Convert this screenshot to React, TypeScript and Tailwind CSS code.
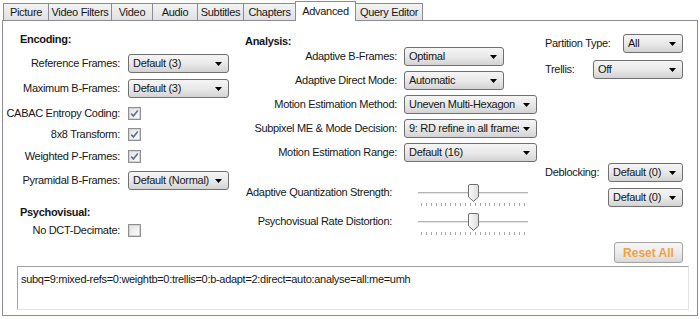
import type { ReactNode } from 'react'

const tabs = [
  { label: 'Picture', w: 'w-[46px]' },
  { label: 'Video Filters', w: 'w-[64px]' },
  { label: 'Video', w: 'w-[42px]' },
  { label: 'Audio', w: 'w-[46px]' },
  { label: 'Subtitles', w: 'w-[47px]' },
  { label: 'Chapters', w: 'w-[53px]' },
  { label: 'Advanced', w: 'w-[61px]', active: true },
  { label: 'Query Editor', w: 'w-[68px]' },
]

function Select({ value, className }: { value: string; className: string }) {
  return (
    <div
      className={`flex h-[19px] items-center overflow-hidden rounded-[3px] border border-[#707070] bg-linear-to-b from-[#f5f5f5] via-[#e9e9e9] to-[#d3d3d3] pl-[4px] pr-[6px] ${className}`}
    >
      <span className="flex-1 overflow-hidden whitespace-nowrap">{value}</span>
      <svg width="7" height="4" viewBox="0 0 7 4" className="ml-[4px] shrink-0">
        <path d="M0 0H7L3.5 4Z" fill="#000" />
      </svg>
    </div>
  )
}

function Check({ on }: { on?: boolean }) {
  return (
    <div className="flex h-[13px] w-[13px] items-center justify-center border border-[#8e8f8f] bg-white">
      <div className="flex h-[11px] w-[11px] items-center justify-center border border-[#d4d4d4] bg-linear-to-br from-[#e4e4e4] to-[#fbfbfb]">
        {on && (
          <svg width="9" height="9" viewBox="0 0 9 9">
            <path d="M1.2 4.6L3.4 7L7.8 1.4" fill="none" stroke="#5a6f9c" strokeWidth="1.6" />
          </svg>
        )}
      </div>
    </div>
  )
}

function Row({ label, children, className = '' }: { label: string; children: ReactNode; className?: string }) {
  return (
    <div className={`flex items-center ${className}`}>
      <div className="w-[118px] shrink-0 pr-[1px] text-right">{label}</div>
      <div className="ml-[7px]">{children}</div>
    </div>
  )
}

function MidRow({ label, value, w, className = '' }: { label: string; value: string; w: string; className?: string }) {
  return (
    <div className={`flex items-center ${className}`}>
      <div className="w-[157px] shrink-0 text-right">{label}</div>
      <Select value={value} className={`ml-[7px] ${w}`} />
    </div>
  )
}

function Slider({ label, className = '' }: { label: string; className?: string }) {
  return (
    <div className={`flex items-start ${className}`}>
      <div className="mt-[-1px] w-[152px] shrink-0 text-right">{label}</div>
      <div className="relative ml-[26px] w-[110px] pt-[7px]">
        <div className="h-[3px] border-t border-[#b4b4b4] border-b border-b-white bg-[#e6e6e6]" />
        <div className="mt-[8px] flex justify-between px-[3px]">
          {Array.from({ length: 22 }).map((_, i) => (
            <div key={i} className="h-[3px] w-px bg-[#a8a8a8]" />
          ))}
        </div>
        <svg width="11" height="18" viewBox="0 0 11 18" className="absolute left-[50px] top-[-1px]">
          <defs>
            <linearGradient id="th" x1="0" y1="0" x2="1" y2="0">
              <stop offset="0" stopColor="#fdfdfd" />
              <stop offset="1" stopColor="#dcdcdc" />
            </linearGradient>
          </defs>
          <path d="M0.5 2Q0.5 0.5 2 0.5H9Q10.5 0.5 10.5 2V13L5.5 17.3L0.5 13Z" fill="url(#th)" stroke="#6f6f6f" />
        </svg>
      </div>
    </div>
  )
}

export default function App() {
  return (
    <div className="h-[319px] w-[700px] overflow-hidden bg-white font-['Liberation_Sans',Arial,sans-serif] text-[11px] tracking-[-0.3px] text-[#161616]">
      {/* Tabs */}
      <div className="flex h-[21px] items-end pl-[3px]">
        {tabs.map((t, i) =>
          t.active ? (
            <div
              key={t.label}
              className={`relative z-10 flex h-[20px] items-start justify-center border border-b-0 border-[#898c95] bg-white pt-[1px] ${t.w} ${i ? '-ml-px' : ''}`}
            >
              {t.label}
            </div>
          ) : (
            <div
              key={t.label}
              className={`mb-[1px] flex h-[17px] items-center justify-center border border-b-0 border-[#898c95] bg-linear-to-b from-[#f3f3f3] to-[#e1e1e1] ${t.w} ${i ? '-ml-px' : ''}`}
            >
              {t.label}
            </div>
          )
        )}
      </div>

      {/* Panel */}
      <div className="-mt-px ml-[2px] flex h-[296px] w-[696px] flex-col border border-[#898c95] bg-white">
        <div className="flex h-[221px]">
          {/* Encoding */}
          <div className="w-[237px] shrink-0">
            <div className="ml-[17px] mt-[10px] h-[14px] font-bold">Encoding:</div>
            <Row label="Reference Frames:" className="mt-[9px]">
              <Select value="Default (3)" className="w-[101px]" />
            </Row>
            <Row label="Maximum B-Frames:" className="mt-[6px]">
              <Select value="Default (3)" className="w-[101px]" />
            </Row>
            <Row label="CABAC Entropy Coding:" className="mt-[8px] h-[14px]">
              <Check on />
            </Row>
            <Row label="8x8 Transform:" className="mt-[7px] h-[14px]">
              <Check on />
            </Row>
            <Row label="Weighted P-Frames:" className="mt-[8px] h-[14px]">
              <Check on />
            </Row>
            <Row label="Pyramidal B-Frames:" className="mt-[8px]">
              <Select value="Default (Normal)" className="w-[101px]" />
            </Row>
            <div className="ml-[17px] mt-[14px] h-[14px] font-bold">Psychovisual:</div>
            <Row label="No DCT-Decimate:" className="mt-[5px] h-[14px]">
              <Check />
            </Row>
          </div>

          {/* Analysis */}
          <div className="w-[305px] shrink-0">
            <div className="ml-[5px] mt-[12px] h-[14px] font-bold">Analysis:</div>
            <MidRow label="Adaptive B-Frames:" value="Optimal" w="w-[100px]" className="mt-[0px]" />
            <MidRow label="Adaptive Direct Mode:" value="Automatic" w="w-[100px]" className="mt-[5px]" />
            <MidRow label="Motion Estimation Method:" value="Uneven Multi-Hexagon" w="w-[133px]" className="mt-[5px]" />
            <MidRow label="Subpixel ME & Mode Decision:" value="9: RD refine in all frames" w="w-[133px]" className="mt-[5px]" />
            <MidRow label="Motion Estimation Range:" value="Default (16)" w="w-[133px]" className="mt-[5px]" />
            <Slider label="Adaptive Quantization Strength:" className="mt-[23px]" />
            <Slider label="Psychovisual Rate Distortion:" className="mt-[8px]" />
          </div>

          {/* Partition / deblocking */}
          <div className="flex-1">
            <div className="mt-[13px] flex items-center">
              <div className="w-[78px]">Partition Type:</div>
              <Select value="All" className="w-[60px]" />
            </div>
            <div className="mt-[7px] flex items-center">
              <div className="w-[48px]">Trellis:</div>
              <Select value="Off" className="w-[90px]" />
            </div>
            <div className="mt-[84px] flex items-center">
              <div className="w-[63px]">Deblocking:</div>
              <Select value="Default (0)" className="w-[75px]" />
            </div>
            <Select value="Default (0)" className="ml-[63px] mt-[6px] w-[75px]" />
          </div>
        </div>

        <div className="flex justify-end pr-[14px]">
          <button className="h-[21px] w-[69px] rounded-[3px] border border-[#a3a3a3] bg-linear-to-b from-[#f6f6f6] via-[#ececec] to-[#d8d8d8] text-[12px] font-bold tracking-normal text-[#f0a23c]">
            Reset All
          </button>
        </div>

        <div className="ml-[14px] mt-[3px] h-[44px] w-[672px] border border-[#a0a0a0] border-b-[#e3e3e3] border-r-[#e3e3e3] px-[3px] pt-[4px]">
          subq=9:mixed-refs=0:weightb=0:trellis=0:b-adapt=2:direct=auto:analyse=all:me=umh
        </div>
      </div>
    </div>
  )
}
